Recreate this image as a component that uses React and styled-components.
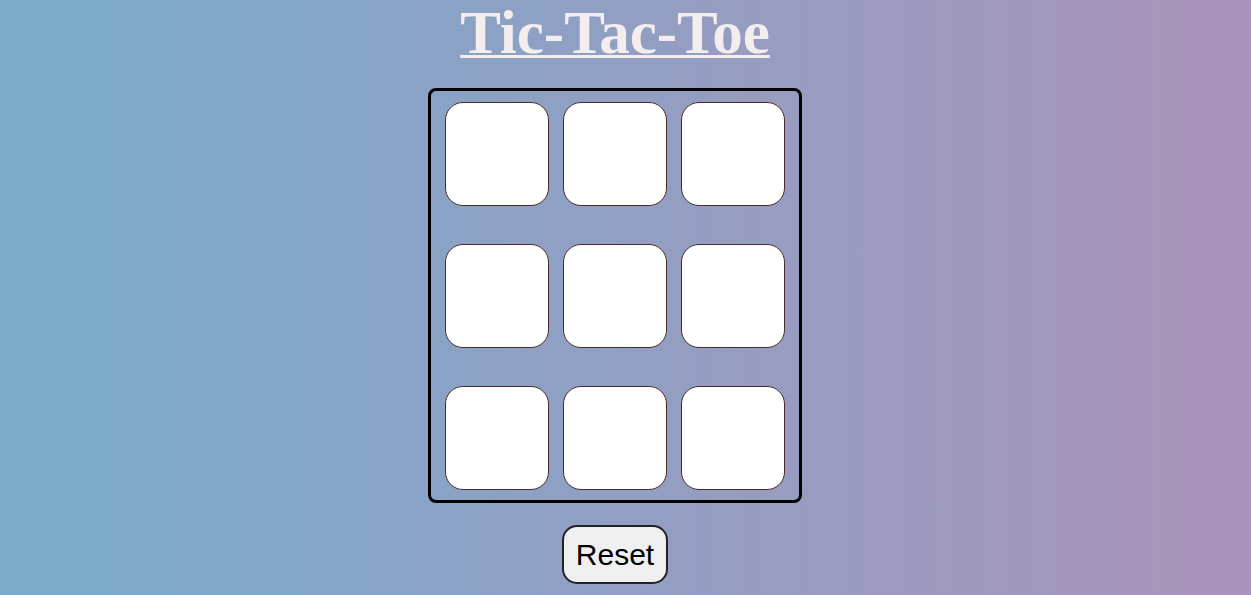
import React, { useState } from "react";
import styled, { createGlobalStyle } from "styled-components";

const GlobalStyle = createGlobalStyle`
  html, body {
    margin: 0;
    padding: 0;
  }
  body {
    min-height: 100vh;
    background: linear-gradient(to right, #7aaacb 5%, #a894ba 95%);
    font-family: "Liberation Serif", "Times New Roman", serif;
  }
`;

const Page = styled.div`
  display: flex;
  flex-direction: column;
  align-items: center;
  padding-right: 21px;
`;

const Title = styled.h1`
  margin: 0;
  font-family: "Liberation Serif", "Times New Roman", serif;
  font-size: 61px;
  font-weight: bold;
  color: #f3eded;
  text-decoration: underline;
  text-decoration-thickness: 3px;
  line-height: 66px;
`;

const Board = styled.div`
  margin-top: 22px;
  display: grid;
  grid-template-columns: repeat(3, 104px);
  grid-template-rows: repeat(3, 104px);
  column-gap: 14px;
  row-gap: 38px;
  padding: 11px 14px 10px;
  border: 3px solid #000;
  border-radius: 8px;
`;

const Cell = styled.button`
  box-sizing: border-box;
  width: 104px;
  height: 104px;
  background: #fff;
  border: 1px solid #4a2a2a;
  border-radius: 18px;
  padding: 0;
  font-family: "Liberation Sans", Arial, sans-serif;
  font-size: 60px;
  cursor: pointer;
`;

const ResetButton = styled.button`
  margin-top: 22px;
  padding: 10px 12px;
  background: #efefef;
  border: 2px solid #222;
  border-radius: 15px;
  font-family: "Liberation Sans", Arial, sans-serif;
  font-size: 30px;
  color: #000;
  line-height: 35px;
  cursor: pointer;
`;

export default function App() {
  const [cells, setCells] = useState(Array(9).fill(""));
  const [turn, setTurn] = useState("X");

  const play = (i) => {
    if (cells[i]) return;
    const next = cells.slice();
    next[i] = turn;
    setCells(next);
    setTurn(turn === "X" ? "O" : "X");
  };

  return (
    <>
      <GlobalStyle />
      <Page>
        <Title>Tic-Tac-Toe</Title>
        <Board>
          {cells.map((c, i) => (
            <Cell key={i} onClick={() => play(i)}>
              {c}
            </Cell>
          ))}
        </Board>
        <ResetButton
          onClick={() => {
            setCells(Array(9).fill(""));
            setTurn("X");
          }}
        >
          Reset
        </ResetButton>
      </Page>
    </>
  );
}
